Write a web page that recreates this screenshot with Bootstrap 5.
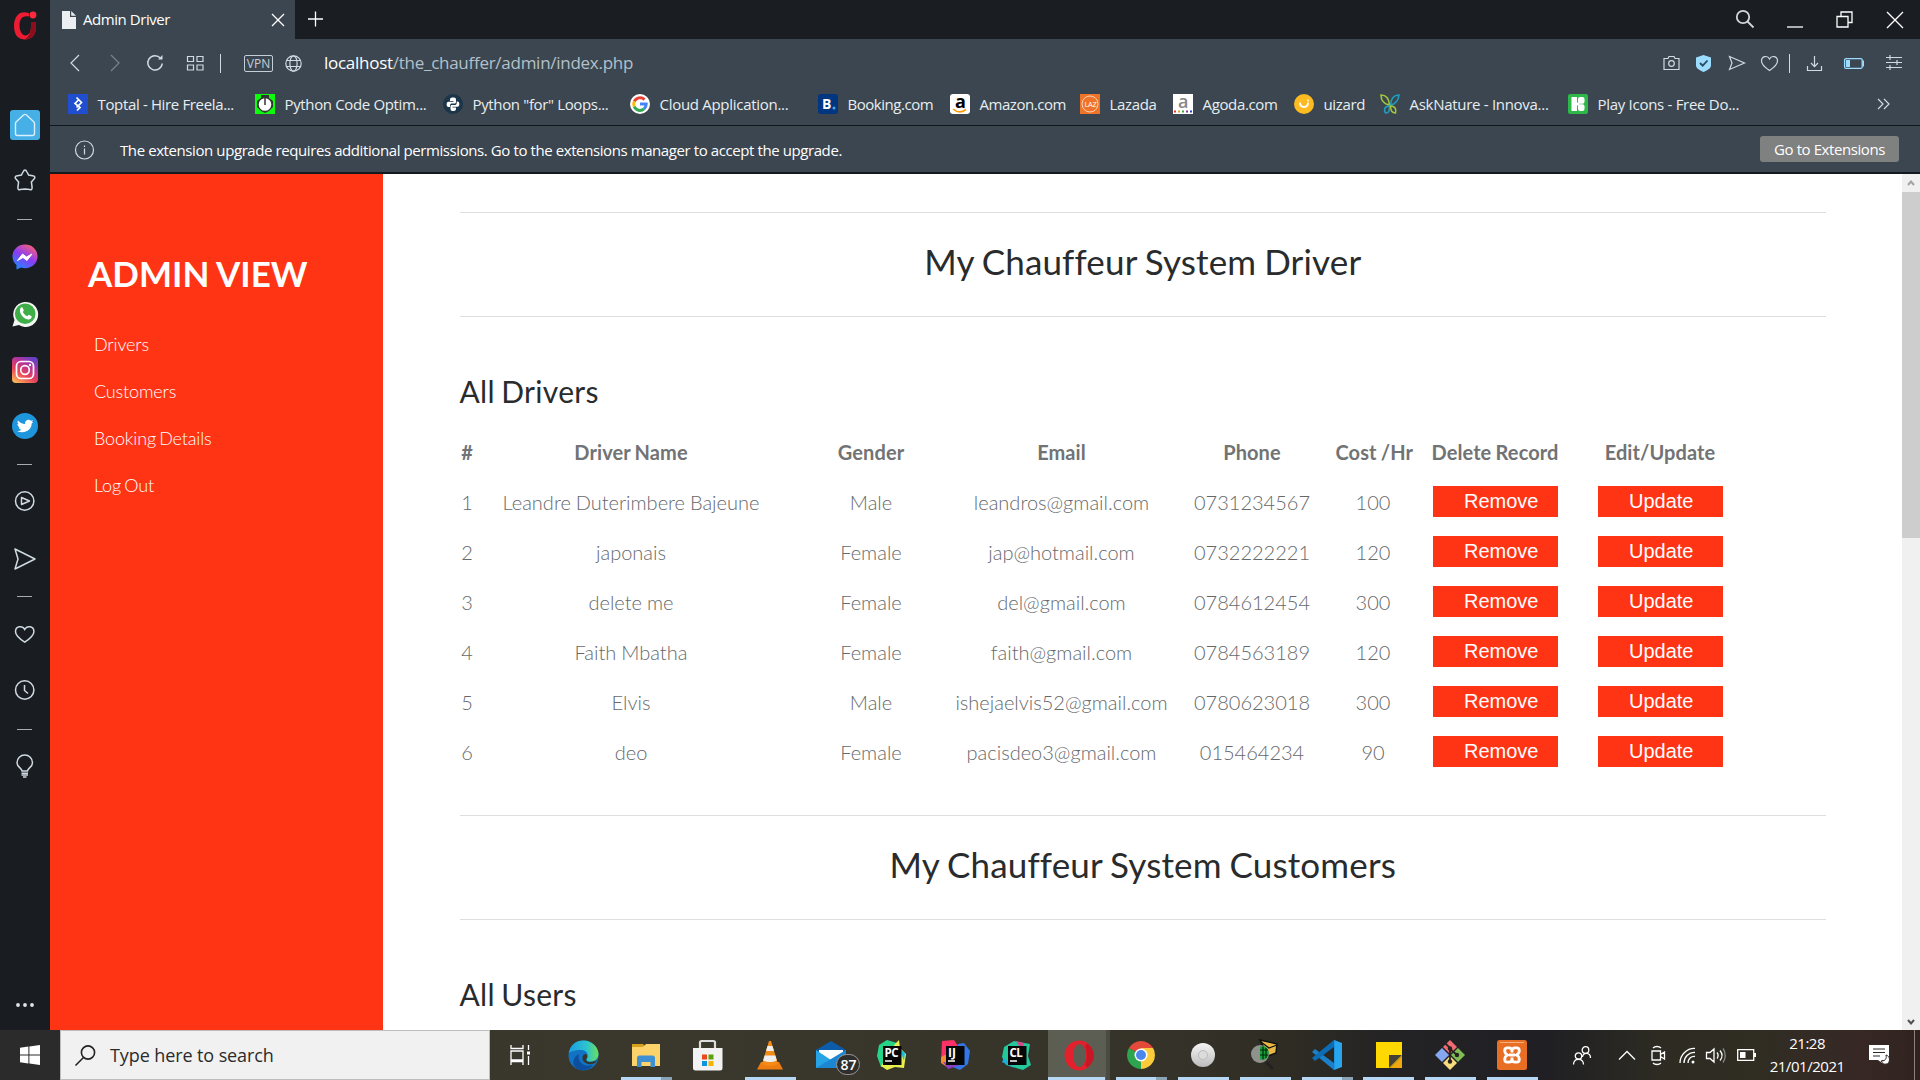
<!DOCTYPE html>
<html lang="en">
<head>
<meta charset="utf-8">
<title>Admin Driver</title>
<link rel="stylesheet" href="https://cdn.jsdelivr.net/npm/bootstrap@5.3.0/dist/css/bootstrap.min.css">
<script src="https://cdn.jsdelivr.net/npm/bootstrap@5.3.0/dist/js/bootstrap.bundle.min.js"></script>
<style>
  body { width: 1920px; height: 1080px; font: 15px/20px "Open Sans", "Noto Sans", sans-serif; letter-spacing: -.35px; background: #1a1e22; }
  svg { display: block; flex: none; fill: none; overflow: visible; }
  .ui { white-space: nowrap; }
  .ln { stroke: #cfdae2; stroke-width: 1.2; }
  .wh { stroke: #fff; stroke-width: 1.3; }

  /* Opera side bar */
  .rail { width: 50px; padding-right: 1px; background: #191d22; display: grid; justify-items: center; align-items: center;
    grid-template-rows: 50px 50px 50px 60px 18px 58px 56px 56px 56px 20px 54px 62px 12px 64px 48px 30px 44px 1fr; }
  .rail .dash { width: 15px; height: 1px; background: #a4abb1; }
  .rail .dots { align-self: end; margin-bottom: 23px; }
  .rail .ln { stroke-width: 1.5; }

  /* Browser chrome */
  .tabs { height: 39px; background: #1a1e22; color: #fff; }
  .tab { width: 245px; background: #3b4650; padding: 0 11px 0 12px; letter-spacing: -.44px; }
  .tab-name { margin: 0 auto 1px 7px; }
  .wincontrols { gap: 33px; padding-right: 17px; }
  .tools { height: 48px; background: #3b4650; padding-left: 18px; padding-right: 18px; }
  .tools .fwd { margin-left: 26px; } .tools .reload { margin-left: 25px; } .tools .speed { margin-left: 24px; }
  .tools .globe { margin-left: 12px; } .tools .gap-m { margin-left: 17px; } .tools .gap-s { margin-left: 16px; }
  .tools .gap-xs { margin-left: 11px; } .tools .gap-l { margin-left: 22px; }
  .addr { font-size: 17px; letter-spacing: -.27px; color: #b4c0c9; margin-left: 22px; }
  .addr b { font-weight: 400; color: #fff; }
  .vpn { width: 29px; height: 17px; margin-left: 23px; border: 1px solid #c3ced6; border-radius: 2px; font-size: 12px; line-height: 15px; letter-spacing: 0; color: #c3ced6; text-align: center; }
  .rule { width: 1px; height: 19px; background: #cfdae2; }
  .marks { height: 38px; background: #3b4650; color: #e7edf1; padding: 0 31px 5px 18px; }
  .marks .bm { gap: 9.5px; width: 187px; }
  .marks .bm:nth-child(2), .marks .bm:nth-child(4), .marks .bm:nth-child(10) { width: 188px; }
  .marks .bm:nth-child(5) { width: 132px; } .marks .bm:nth-child(6) { width: 130px; letter-spacing: -.45px; }
  .marks .bm:nth-child(7) { width: 93px; } .marks .bm:nth-child(8) { width: 121px; }
  .marks .bm:nth-child(9) { width: 86px; }
  .marks .bm:nth-child(n+10) { letter-spacing: -.29px; }
  .marks .bm:nth-child(4) { letter-spacing: -.29px; }
  .marks .bm:nth-child(5) { letter-spacing: -.47px; }
  .info { height: 49px; background: #3b4650; border-top: 1px solid #11161b; border-bottom: 2px solid #14191e; color: #fff; padding: 1px 21px 0 24px; letter-spacing: -.41px; }
  .info-text { margin: 1px auto 0 26px; }
  .goext { width: 139px; height: 26px; background: #7f8080; border: 0; border-radius: 3px; color: #fff; font-size: 15px; line-height: 20px; padding: 0; letter-spacing: -.42px; margin-bottom: 1px; }

  /* Page */
  .page { font-family: Lato, sans-serif; background: #fff; letter-spacing: 0; overflow: hidden; }
  .side { width: 333px; background: #ff3415; color: #fff; padding: 78px 0 0 38px; }
  .side h1 { font-size: 35px; line-height: 42px; font-weight: 700; letter-spacing: 0; word-spacing: -.5px; margin: 0 0 27px; }
  .side a { color: #fff; font-size: 18px; line-height: 47px; font-weight: 300; letter-spacing: -.15px; word-spacing: -1.500px; padding: 0 0 0 6px; }
  .main { padding: 38px 76px 0 77px; color: #292b2c; overflow: hidden; }
  .main .title-band, .main .sub, .drivers { position: static; margin-left: -.5px; }
  .title-band { height: 105px; border-top: 1px solid #dedede; border-bottom: 1px solid #dedede; text-align: center; font-size: 35px; line-height: 42px; padding-top: 27px; margin: 0; font-weight: 400; letter-spacing: .15px; word-spacing: -1.200px; }
  .sub { font-size: 30px; line-height: 36px; font-weight: 400; margin: 56px 0 18px; letter-spacing: .3px; word-spacing: -1.500px; }
  .drivers { table-layout: fixed; width: 1281px; text-align: center; font-size: 20px; line-height: 24px; color: #717374; margin-bottom: 38px; }
  .drivers col:nth-child(1) { width: 15px; } .drivers col:nth-child(2) { width: 313px; }
  .drivers col:nth-child(3) { width: 167px; } .drivers col:nth-child(4) { width: 214px; }
  .drivers col:nth-child(5) { width: 167px; } .drivers col:nth-child(6) { width: 75px; }
  .drivers col:nth-child(7) { width: 169px; } .drivers col:nth-child(8) { width: 161px; }
  .drivers th, .drivers td { height: 50px; padding: 0; vertical-align: middle; white-space: nowrap; }
  .drivers th { letter-spacing: .1px; word-spacing: -.8px; }
  .drivers td { font-weight: 300; color: #66696b; letter-spacing: 0; word-spacing: -.5px; }
  .drivers .act { display: block; width: 125px; height: 31px; background: #ff3415; color: #fff; border: 0; border-radius: 0; margin: 0 auto 2px; padding: 0 0 0 31.5px; font: 20px/30px "Liberation Sans", sans-serif; text-align: left; }
  .scroller { width: 18px; background: #f0f0f0; }
  .scroller .thumb { width: 18px; height: 346px; background: #cdcdcd; }
  .scroller .arrow { height: 18px; }

  /* Windows taskbar */
  .taskbar { height: 50px; background: linear-gradient(90deg, #38352b 0, #3a382c 700px, #353329 1180px, #2f2d23 1280px, #232225 1400px, #202024 1550px, #2d2b22 1660px, #302d23 1760px, #372826 1860px, #30231f 1920px); color: #fff; }
  .start { width: 60px; background: #2b2b2b; }
  .search { width: 430px; background: #f1f1f1; border: 1px solid #bdbdbd; color: #2b2b2b; font-size: 18px; letter-spacing: -.1px; padding-left: 14px; gap: 14px; }
  .app { width: 61.9px; height: 50px; flex: none; display: flex; align-items: center; justify-content: center; position: relative; }
  .app.tview { width: 60.9px; margin-right: 2px; }
  .app.run::after { content: ""; position: absolute; left: 6px; bottom: 0; width: 51px; height: 3px; background: #b6d8f4; }
  .app.multi::after { background: linear-gradient(90deg, #b6d8f4 40px, #8ba3b6 40px); }
  .app.active { background: #5c5d53; box-shadow: inset -4px 0 #4b4b43; }
  .app.active::after { left: 0; width: 57px; }
  .badge-num { position: absolute; left: 36px; top: 24px; width: 24px; height: 21px; border: 1px solid #999; border-radius: 11px; background: #2e2f2d; font: 600 14px/19px "Open Sans", sans-serif; text-align: center; letter-spacing: 0; }
  .tray { margin-left: 30px; }
  .tray .up { margin-left: 28px; } .tray .meet { margin-left: 16px; } .tray .wifi { margin-left: 13px; }
  .tray .vol { margin-left: 10px; } .tray .batt { margin-left: 12px; } .tray .note { margin-left: 20px; }
  .clock { text-align: center; line-height: 23px; width: 84px; margin-left: 9px; letter-spacing: -.46px; }
  .peek { width: 1px; background: #8a807d; margin-left: 24px; }
</style>
</head>
<body class="d-flex flex-column overflow-hidden m-0">
<div class="d-flex flex-grow-1 overflow-hidden">

  <aside class="rail flex-shrink-0">
    <svg width="24" height="30" viewBox="0 0 24 30"><path fill-rule="evenodd" d="M16 3.300C7-.5 1 6 1 16s5 13.500 11 13.500c7 0 11-5 11-12.500v-5h-5v5c0 4.500-2 8.500-5.500 8.500S6.500 21 6.500 15.500C6.500 9.500 9 5 16 6.500z" fill="#ee1c33"/><path d="M18 12h5v5c0 7.500-4 12.500-11 12.500 4-3 6-7 6-12.500z" fill="#8c0d1c"/><circle cx="20" cy="5" r="3.400" fill="#ff2a3f"/></svg>
    <i></i>
    <svg width="30" height="30" viewBox="0 0 30 30"><rect width="30" height="30" rx="3" fill="#45afe6"/><path d="M5.500 13.500Q5.500 12.500 6.300 11.700L13.500 5Q15 3.800 16.500 5l7.200 6.700q.8.800.8 1.800v10a2 2 0 0 1-2 2h-15a2 2 0 0 1-2-2z" stroke="#d9effa" stroke-width="1.400"/></svg>
    <svg class="ln" width="22" height="22" viewBox="0 0 22 22"><path d="M11 1c1 0 1.500 1 2 2l1.600 3 4 .7c2.400.4 2.900 1.800 1.400 3.400l-2.600 2.800.7 5.500c.1 1.900-.6 2.600-2.400 2.200L11 20l-4.700.6c-1.800.4-2.500-.3-2.400-2.200l.7-5.500L2 10.100C.5 8.500 1 7.100 3.400 6.700l4-.7L9 3c.5-1 1-2 2-2z"/></svg>
    <i class="dash"></i>
    <svg width="26" height="26" viewBox="0 0 26 26"><defs><linearGradient id="ms" x1=".2" y1="1" x2=".8" y2="0"><stop stop-color="#1a8cff"/><stop offset=".5" stop-color="#8a3cf5"/><stop offset="1" stop-color="#ff6070"/></linearGradient></defs><path d="M13 .5C6 .5.500 5.500.500 12.500c0 3.500 1.500 6.500 4 8.500v4.500l4.500-2c8 2.500 16.500-2.500 16.500-11C25.500 5.500 20 .5 13 .5z" fill="url(#ms)"/><path d="M5.500 16.500l5-6.500 4 3 5.500-3-5 6.500-4-3z" fill="#fff" stroke="#fff"/></svg>
    <svg width="26" height="26" viewBox="0 0 26 26"><path d="M.500 25.500l2-6.500A12.500 12.500 0 1 1 7 24z" fill="#f4f6f4"/><circle cx="13.200" cy="12.800" r="10.300" fill="#3fae49"/><path d="M8.500 7c1-1 2-.8 2.500.4l.8 2-1 1.600c1 2 2.400 3.300 4.400 4.200l1.500-1.500 2.600 1.400c.8.500.3 2.200-1 3C14 20.500 5.500 12.500 8.500 7z" fill="#fff"/></svg>
    <svg width="26" height="26" viewBox="0 0 26 26"><defs><linearGradient id="ig" x1=".1" y1="1" x2=".7" y2="0"><stop stop-color="#fdc157"/><stop offset=".4" stop-color="#e8425c"/><stop offset=".75" stop-color="#b233a0"/><stop offset="1" stop-color="#6740c4"/></linearGradient></defs><rect width="26" height="26" rx="4" fill="url(#ig)"/><g stroke="#fff" stroke-width="1.700"><rect x="4.500" y="4.500" width="17" height="17" rx="4.500"/><circle cx="13" cy="13" r="4.300"/></g><circle cx="18" cy="8" r="1.200" fill="#fff"/></svg>
    <svg width="26" height="26" viewBox="0 0 26 26"><circle cx="13" cy="13" r="13" fill="#1f95dc"/><path d="M6 7.500c2 2.300 4.200 3.300 7 3.500-.5-3.500 3.500-5.500 6-3.200l2-.6-1 1.900 1.200-.2-1.500 1.700C19.700 17.500 12 21.500 5 18c2 .1 3.300-.4 4.500-1.300-1.500-.2-2.400-1-2.900-2.200h1.300C6.300 13.700 5.400 12.500 5.400 11l1.300.3C5.300 10 5.200 8.700 6 7.500z" fill="#fff"/></svg>
    <i class="dash"></i>
    <svg class="ln" width="20" height="20" viewBox="0 0 20 20"><circle cx="9.700" cy="10" r="9.200"/><path d="M6.500 6.500v7l8-3.500z" stroke-linejoin="round"/></svg>
    <svg class="ln" width="22" height="22" viewBox="0 0 22 22"><path d="M1 1l20 10L1 21l3-10z" stroke-linejoin="round"/></svg>
    <i class="dash"></i>
    <svg class="ln" width="20" height="17" viewBox="0 0 20 17"><path d="M9.700 16.200C5 13 .5 9.700.500 5.700c0-5.500 6.700-6.700 9.200-2.300 2.500-4.400 9.200-3.200 9.200 2.300 0 4-4.500 7.300-9.200 10.500z"/></svg>
    <svg class="ln" width="20" height="20" viewBox="0 0 20 20"><circle cx="9.700" cy="10" r="9.200"/><path d="M9.500 5v5.500l3.500 3"/></svg>
    <i class="dash"></i>
    <svg class="ln" width="18" height="23" viewBox="0 0 18 23"><path d="M6 16c0-3-5-3.500-5-8.300a7.700 7.700 0 0 1 15.500 0C16.500 12.500 11.500 13 11.500 16zM5.500 18.200h6.500M5.500 20h6.500M7 22h3.500"/></svg>
    <svg class="dots" width="18" height="4" viewBox="0 0 18 4"><g fill="#dfe6ea"><circle cx="2" cy="2" r="1.900"/><circle cx="9" cy="2" r="1.900"/><circle cx="16" cy="2" r="1.900"/></g></svg>
  </aside>

  <div class="d-flex flex-column flex-grow-1 overflow-hidden">
    <header class="ui flex-shrink-0">
      <div class="tabs d-flex align-items-center">
        <div class="tab d-flex align-items-center h-100">
          <svg width="14" height="18" viewBox="0 0 14 18"><path d="M0 0h8v6h6v12H0zM9.200 0L14 4.800H9.200z" fill="#eceff1"/></svg>
          <span class="tab-name">Admin Driver</span>
          <svg class="wh" width="12" height="12" viewBox="0 0 12 12"><path d="M0 0l12 12M12 0L0 12"/></svg>
        </div>
        <svg class="wh ms-3 me-auto" width="15" height="15" viewBox="0 0 15 15"><path d="M4.500-.5v15M-3 7h15"/></svg>
        <div class="wincontrols d-flex align-items-center">
          <svg width="18" height="18" viewBox="1 1 18 18" stroke="#d4d7d9" stroke-width="1.800"><circle cx="7" cy="7" r="6.200"/><path d="M11.500 11.500l6 6"/></svg>
          <svg class="wh" width="16" height="16" viewBox="1 0 16 16"><path d="M0 15h16"/></svg>
          <svg class="wh" width="17" height="17" viewBox="1 0 17 17"><path d="M1 5.500h11v10.500H1zM5 5V1h11v10.500h-4"/></svg>
          <svg class="wh" width="16" height="16" viewBox="0 0 16 16"><path d="M0 0l16 16M16 0L0 16"/></svg>
        </div>
      </div>

      <div class="tools d-flex align-items-center">
        <svg class="ln" width="14" height="16" viewBox="0 0 14 16"><path d="M11 0L3 8l8 8"/></svg>
        <svg class="fwd" width="14" height="16" viewBox="0 0 14 16" stroke="#77838d" stroke-width="1.200"><path d="M3 0l8 8-8 8"/></svg>
        <svg class="ln reload" width="16" height="16" viewBox="0 0 16 16"><path d="M15.200 8.500A7.200 7.200 0 1 1 13.500 3.200" stroke-width="1.500"/><path d="M11 4.500h4.500V0z" fill="#cfdae2" stroke="none"/></svg>
        <svg class="ln speed" width="17" height="15" viewBox="0 0 17 15"><path d="M.5.500h6v5h-6zM10 .5h6v5h-6zM.5 9h6v5h-6zM10 9h6v5h-6z"/></svg>
        <i class="rule gap-s"></i>
        <span class="vpn">VPN</span>
        <svg class="ln globe" width="17" height="17" viewBox="0 0 17 17"><circle cx="8.500" cy="8.500" r="7.700"/><ellipse cx="8.500" cy="8.500" rx="3.600" ry="7.700"/><path d="M1.500 5.500h14M1.500 11.500h14"/></svg>
        <span class="addr me-auto"><b>localhost</b>/the_chauffer/admin/index.php</span>
        <svg class="ln" width="16" height="14" viewBox="-.500 0 16 14"><path d="M.5 2.500h4l1-2h5l1 2h4v11H.5z"/><circle cx="8" cy="7.500" r="2.800"/></svg>
        <svg class="gap-m" width="15" height="17" viewBox="0 0 15 17"><path d="M7.500 0L15 2.500v8c0 3-4 5-7.500 6.500C4 15.500 0 13.500 0 10.500v-8z" fill="#9bdcff"/><path d="M4 8l2.700 2.700L11.500 5.500" stroke="#2c4a5e" stroke-width="1.800"/></svg>
        <svg class="ln gap-m" width="17" height="14" viewBox="-.500 0 17 14"><path d="M1 .5L16 7 1 13.500 3.500 7z"/></svg>
        <svg class="ln gap-s" width="17" height="15" viewBox="0 0 17 15"><path d="M8.500 14.500C4 11.500.5 8.500.5 5c0-5 6-6 8-2 2-4 8-3 8 2 0 3.500-3.500 6.500-8 9.500z"/></svg>
        <i class="rule gap-xs"></i>
        <svg class="ln gap-m" width="15" height="15" viewBox="0 0 15 15"><path d="M.5 10v4.500h14V10M7.500 0v10.500M4 7l3.500 3.700L11 7"/></svg>
        <svg class="gap-l" width="20" height="11" viewBox="0 0 20 11"><rect x=".6" y=".6" width="17.600" height="9.800" rx="1.500" stroke="#9bdcff" stroke-width="1.300"/><path d="M2 2h4v7H2zM18.500 2.500H20v6h-1.500z" fill="#9bdcff"/></svg>
        <svg class="ln gap-l" width="16" height="15" viewBox="0 1 16 15"><path d="M0 2.500h16M0 7.500h16M0 12.500h16M4 0v5M11 5v5M4 10v5"/></svg>
      </div>

      <nav class="marks d-flex align-items-center">
        <div class="bm d-flex align-items-center"><svg width="20" height="20" viewBox="0 0 20 20"><path d="M0 0h20v20H0z" fill="#204ecf"/><path d="M8.500 3.500l5 5-5 5M11 5.500l-4 4 5 4-3 3" stroke="#fff" stroke-width="1.700"/></svg>Toptal - Hire Freela...</div>
        <div class="bm d-flex align-items-center"><svg width="20" height="20" viewBox="0 0 20 20"><path d="M0 0h20v20H0z" fill="#0cfc0c"/><path d="M6 1h8v3l4 3v6l-4 4-4 2-4-2-4-4V7l4-3z" fill="#333"/><circle cx="10" cy="10.500" r="6.300" fill="#fff"/><path d="M10 4v7" stroke="#333" stroke-width="1.500"/></svg>Python Code Optim...</div>
        <div class="bm d-flex align-items-center"><svg width="20" height="20" viewBox="0 0 20 20"><circle cx="10" cy="10" r="10" fill="#1d3549"/><path d="M10 3.500c-3 0-3 1-3 3.500h3.500v.8H5.500C3 7.800 3 13 5.500 13H7v-1.500c0-1.500 1-2 2-2h2.500c1 0 1.500-.7 1.500-1.500V5.500c0-1.500-1-2-3-2zM10 17c3 0 3-1 3-3.500H9.500v-.8h5c2.500 0 2.500-5.200 0-5.200h-.8V9c0 1.500-1 2-2 2H9c-1 0-1.500.7-1.500 1.500V15c0 1.500 1 2 2.500 2z" fill="#fff"/></svg>Python "for" Loops...</div>
        <div class="bm d-flex align-items-center"><svg width="20" height="20" viewBox="0 0 20 20"><circle cx="10" cy="10" r="10" fill="#fff"/><g stroke-width="3"><path d="M4.300 7.500A6.300 6.300 0 0 1 14.500 5.600" stroke="#ea4335"/><path d="M4.300 12.700a6.300 6.300 0 0 1 0-5.300" stroke="#fbbc05"/><path d="M14 14.900a6.300 6.300 0 0 1-9.800-2.200" stroke="#34a853"/><path d="M10 10h6.200c0 2-.8 3.800-2.200 5" stroke="#4285f4"/></g></svg>Cloud Application...</div>
        <div class="bm d-flex align-items-center"><svg width="20" height="20" viewBox="0 0 20 20"><rect width="20" height="20" rx="3" fill="#003580"/><text x="4" y="15" font-size="14" font-weight="700" fill="#fff" letter-spacing="0">B</text><circle cx="16" cy="14" r="1.500" fill="#4aa8ee"/></svg>Booking.com</div>
        <div class="bm d-flex align-items-center"><svg width="20" height="20" viewBox="0 0 20 20"><rect width="20" height="20" rx="3" fill="#fff"/><text x="5" y="14" font-size="18" font-weight="700" fill="#000">a</text><path d="M3 15c4 3.500 9 3.500 13 .5" stroke="#f90" stroke-width="1.600"/></svg>Amazon.com</div>
        <div class="bm d-flex align-items-center"><svg width="20" height="20" viewBox="0 0 20 20"><path d="M0 0h20v20H0z" fill="#f0732a"/><circle cx="10" cy="10" r="8" stroke="#fbd3b4"/><text x="4.500" y="13" font-size="7.500" fill="#fff">LAZ</text></svg>Lazada</div>
        <div class="bm d-flex align-items-center"><svg width="20" height="20" viewBox="0 0 20 20"><path d="M0 0h20v20H0z" fill="#fff"/><text x="5" y="14" font-size="18" font-weight="600" fill="#888">a</text><path d="M1 16.500h2v2H1z" fill="#e33"/><path d="M5 16.500h2v2H5z" fill="#e8a020"/><path d="M9 16.500h2v2H9z" fill="#3a3"/><path d="M13 16.500h2v2h-2z" fill="#939"/><path d="M17 16.500h2v2h-2z" fill="#24c"/></svg>Agoda.com</div>
        <div class="bm d-flex align-items-center"><svg width="20" height="20" viewBox="0 0 20 20"><circle cx="10" cy="10" r="10" fill="#fdbb21"/><path d="M6 8.500c0 6 8 6 8 0" stroke="#fff" stroke-width="1.800"/><circle cx="14" cy="6.500" r="1" fill="#fff"/></svg>uizard</div>
        <div class="bm d-flex align-items-center"><svg width="20" height="20" viewBox="0 0 20 20" stroke-width="1.600"><path d="M9.500 11C3 10 1 5 1 1c5 0 8 4 8.500 10z" stroke="#a4c639"/><path d="M10.500 11c6-1 8-6 8.500-10-5 0-8 4-8.500 10z" stroke="#1f9ec0"/><path d="M9.500 12c-5 0-6 4-4 7 4 0 4-3 4-7z" stroke="#1f9ec0"/><path d="M10.500 12c5 0 6 4 5 7-4 0-5-3-5-7z" stroke="#a4c639"/></svg>AskNature - Innova...</div>
        <div class="bm d-flex align-items-center"><svg width="20" height="20" viewBox="0 0 20 20"><rect width="20" height="20" rx="2" fill="#2db84a"/><path d="M3.500 3H9v14H3.500z" fill="#fff"/><rect x="10" y="3" width="6.500" height="6.700" rx="2" fill="#fff"/><rect x="10" y="10.300" width="6.500" height="6.700" rx="2" fill="#fff"/><path d="M8.500 8.500h3v3h-3z" fill="#fff"/></svg>Play Icons - Free Do...</div>
        <svg class="ln ms-auto" width="12" height="10" viewBox="0 0 12 10"><path d="M1 0l5 5-5 5M7 0l5 5-5 5"/></svg>
      </nav>

      <div class="info d-flex align-items-center">
        <svg class="ln" width="20" height="20" viewBox="-.5 0 20 20"><circle cx="10" cy="10" r="9"/><path d="M10 8.500v6M10 5.500V7"/></svg>
        <span class="info-text">The extension upgrade requires additional permissions. Go to the extensions manager to accept the upgrade.</span>
        <button class="goext">Go to Extensions</button>
      </div>
    </header>

    <div class="page d-flex flex-grow-1">
      <nav class="side flex-shrink-0">
        <h1>ADMIN VIEW</h1>
        <div class="nav flex-column">
          <a class="nav-link" href="#">Drivers</a>
          <a class="nav-link" href="#">Customers</a>
          <a class="nav-link" href="#">Booking Details</a>
          <a class="nav-link" href="#">Log Out</a>
        </div>
      </nav>
      <main class="main flex-grow-1">
        <h2 class="title-band">My Chauffeur System Driver</h2>
        <h3 class="sub">All Drivers</h3>
        <table class="drivers">
          <colgroup><col><col><col><col><col><col><col><col></colgroup>
          <thead><tr><th>#</th><th>Driver Name</th><th>Gender</th><th>Email</th><th>Phone</th><th>Cost /Hr</th><th>Delete Record</th><th>Edit/Update</th></tr></thead>
          <tbody>
            <tr><td>1</td><td>Leandre Duterimbere Bajeune</td><td>Male</td><td>leandros@gmail.com</td><td>0731234567</td><td>100</td><td><button class="act">Remove</button></td><td><button class="act">Update</button></td></tr>
            <tr><td>2</td><td>japonais</td><td>Female</td><td>jap@hotmail.com</td><td>0732222221</td><td>120</td><td><button class="act">Remove</button></td><td><button class="act">Update</button></td></tr>
            <tr><td>3</td><td>delete me</td><td>Female</td><td>del@gmail.com</td><td>0784612454</td><td>300</td><td><button class="act">Remove</button></td><td><button class="act">Update</button></td></tr>
            <tr><td>4</td><td>Faith Mbatha</td><td>Female</td><td>faith@gmail.com</td><td>0784563189</td><td>120</td><td><button class="act">Remove</button></td><td><button class="act">Update</button></td></tr>
            <tr><td>5</td><td>Elvis</td><td>Male</td><td>ishejaelvis52@gmail.com</td><td>0780623018</td><td>300</td><td><button class="act">Remove</button></td><td><button class="act">Update</button></td></tr>
            <tr><td>6</td><td>deo</td><td>Female</td><td>pacisdeo3@gmail.com</td><td>015464234</td><td>90</td><td><button class="act">Remove</button></td><td><button class="act">Update</button></td></tr>
          </tbody>
        </table>
        <h2 class="title-band">My Chauffeur System Customers</h2>
        <h3 class="sub">All Users</h3>
      </main>
      <div class="scroller d-flex flex-column flex-shrink-0">
        <div class="arrow d-flex align-items-center justify-content-center"><svg width="8" height="6" viewBox="0 0 8 6"><path d="M1 5l3-3.500L7 5" stroke="#a3a3a3" stroke-width="2"/></svg></div>
        <div class="thumb"></div>
        <div class="arrow d-flex align-items-center justify-content-center mt-auto"><svg width="8" height="6" viewBox="0 -1 8 6"><path d="M1 1l3 3.500L7 1" stroke="#505050" stroke-width="2"/></svg></div>
      </div>
    </div>
  </div>
</div>

<footer class="taskbar d-flex ui flex-shrink-0">
  <div class="start d-flex align-items-center justify-content-center"><svg width="20" height="20" viewBox="0 0 20 20"><path d="M0 2.800L8.400 1.600v7.900H0zM9.400 1.500L20 0v9.500H9.400zM0 10.500h8.400v7.900L0 17.200zM9.400 10.500H20V20L9.400 18.500z" fill="#fff"/></svg></div>
  <div class="search d-flex align-items-center"><svg width="21" height="21" viewBox="0 0 21 21" stroke="#222" stroke-width="1.600"><circle cx="13" cy="7.500" r="6.600"/><path d="M8.500 12.500L.5 20.500"/></svg><span>Type here to search</span></div>
  <div class="app tview"><svg class="wh" width="20" height="20" viewBox="0 0 20 20"><path d="M1 0v3.500h12V0M1 6h12v9H1zM1 20v-3.500h12V20M18.500 0v5M18.500 11v9"/><path d="M17 6.500h3v3h-3z" fill="#fff" stroke="none"/></svg></div>
  <div class="app"><svg width="31" height="31" viewBox="0 0 31 31"><defs><linearGradient id="e1" x2="1"><stop stop-color="#1b9de2"/><stop offset=".6" stop-color="#2cc3cf"/><stop offset="1" stop-color="#6be05a"/></linearGradient></defs><circle cx="15.500" cy="15.500" r="15" fill="#1273c4"/><path d="M.8 13C2 5 8 .500 15.500.500 24 .5 30.500 7 30.500 14c0 5-4 7.500-8 7.500-3.500 0-5-2-3.500-3.500 2-3 0-7.500-5.500-8C8 9.500 3 11 .8 13z" fill="url(#e1)"/><path d="M11 14c-2 7 4 14 14 11-4 6-13 7-18 2-3-4-2-10 4-13z" fill="#0c4f9e"/><path d="M19 18c-2 2-.5 4 3 4 3 0 6-1 7-2.500L27 23c-6 3-13 0-12.500-5.500 0-2 1.500-3.500 3.500-3.500 1.500 1.500 1.500 3 1 4z" fill="#38362b"/></svg></div>
  <div class="app run multi"><svg width="28" height="24" viewBox="0 0 28 24"><path d="M0 1h11l3 3H0z" fill="#d9a01c"/><path d="M0 4h11l3-3h14v22H0z" fill="#fbd36a"/><path d="M5 24V15q0-2.500 2.500-2.500h13q2.500 0 2.500 2.500v9h-4.500v-5h-9v5z" fill="#3f8fd3"/></svg></div>
  <div class="app"><svg width="30" height="31" viewBox="0 0 30 31"><path d="M7 9V2.500Q7 1 8.500 1h12Q22 1 22 2.500V9" stroke="#ddd" stroke-width="2.200"/><path d="M0 8h29.500v20q0 2.500-2.500 2.500H2.500Q0 30.500 0 28z" fill="#f2f2f2"/><path d="M9 14.500h5v5H9z" fill="#e8491f"/><path d="M15.500 14.500h5v5h-5z" fill="#5aa30a"/><path d="M9 21h5v5H9z" fill="#0c94e0"/><path d="M15.500 21h5v5h-5z" fill="#f5b400"/></svg></div>
  <div class="app run"><svg width="26" height="29" viewBox="0 0 26 29"><path d="M4 21h18l4 7.500H0z" fill="#ee7c10"/><path d="M12 0h2l7 23q-8 4-16 0z" fill="#f48b17"/><path d="M10.500 5h5l1.500 5H9zM7.600 14.500h10.800l1.400 5q-7 3-13.600 0z" fill="#eee"/></svg></div>
  <div class="app"><svg width="30" height="28" viewBox="0 0 30 28"><path d="M0 9L15 0l15 9v6H0z" fill="#0c5cab"/><path d="M3 9h24v10H3z" fill="#fff"/><path d="M0 9l15 10 15-10v18H0z" fill="#27a4e6"/><path d="M0 27L30 9v18z" fill="#1b86d2"/></svg><span class="badge-num">87</span></div>
  <div class="app"><svg width="30" height="30" viewBox="1 0 30 30"><path d="M2 5l8-5 10 3-12 24H4L0 16z" fill="#25d489"/><path d="M18 4l4-4 1 8 6 6-2 14-9-1-8 3-6-4z" fill="#e9f04e"/><path d="M22 8l6 5-1 8z" fill="#20bdd8"/><path d="M6 6h18.500v19H6z" fill="#070707"/><text x="7.500" y="16.500" font-size="11.500" font-weight="700" fill="#fff" letter-spacing="-.5">PC</text><path d="M8 21h7" stroke="#fff" stroke-width="1.500"/></svg></div>
  <div class="app"><svg width="30" height="30" viewBox="0 0 30 30"><path d="M2 1l12-1 4 6-8 12-9 4z" fill="#fb3268"/><path d="M1 17l6-3v13l-6-4z" fill="#f58b35"/><path d="M18 4l6-1 6 8-2 13-8 6-10-4z" fill="#3376e8"/><path d="M3 22l5 7 12-4z" fill="#8a3ec2"/><path d="M6 6h18.500v19H6z" fill="#070707"/><text x="8" y="16.500" font-size="12" font-weight="700" fill="#fff" letter-spacing="0">IJ</text><path d="M8 21h7" stroke="#fff" stroke-width="1.500"/></svg></div>
  <div class="app"><svg width="30" height="30" viewBox="0 0 30 30"><path d="M2 7l10-6 16 3-2 12 3 9-8 5-17-5-4-8z" fill="#22c99a"/><path d="M14 1l8 2-2 8z" fill="#d6488c"/><path d="M2 18l-2 4 12 6z" fill="#1baedb"/><path d="M6 6h18.500v19H6z" fill="#070707"/><text x="7.500" y="16.500" font-size="11.500" font-weight="700" fill="#fff" letter-spacing="-.5">CL</text><path d="M8 21h7" stroke="#fff" stroke-width="1.500"/></svg></div>
  <div class="app run active"><svg width="30" height="31" viewBox="0 0 30 31"><path fill-rule="evenodd" d="M15 .5a14.500 15 0 1 0 .1 0zM15.500 4a6.300 11.500 0 1 1-.1 0z" fill="#e3202c"/><path d="M21 6q4 9.500 0 19l2.500 2.500Q30 22 30 15.500T23.500 3.500z" fill="#b81020" opacity=".6"/></svg></div>
  <div class="app run multi"><svg width="28" height="28" viewBox="0 0 28 28"><path d="M14 14L1.900 7A14 14 0 0 1 26.100 7z" fill="#e5493a"/><path d="M14 14L26.100 7A14 14 0 0 1 14 28z" fill="#fccb3c"/><path d="M14 14v14A14 14 0 0 1 1.900 7z" fill="#2ea44f"/><path d="M14 7h12l-5.500 11z" fill="#fccb3c"/><circle cx="14" cy="14" r="6.500" fill="#fff"/><circle cx="14" cy="14" r="5" fill="#4a86ee"/></svg></div>
  <div class="app run"><svg width="24" height="24" viewBox="0 0 24 24"><defs><linearGradient id="g1" y2="1" x2="0"><stop stop-color="#f5f5f5"/><stop offset="1" stop-color="#bcbcbc"/></linearGradient></defs><circle cx="12" cy="12" r="12" fill="url(#g1)"/><circle cx="12" cy="12" r="4.500" stroke="#bbb" fill="#dcdcdc"/></svg></div>
  <div class="app run"><svg width="29" height="30" viewBox="0 0 29 30"><path d="M10 0l17 4-1 9-8 3z" fill="#eab646" stroke="#111" stroke-width="1.500"/><path d="M11 2l8 6 8-3" stroke="#111" stroke-width="1.300"/><circle cx="10" cy="14" r="9" fill="#8e918c"/><path d="M10 6.500h5c5 3 5 9 0 13h-5z" fill="#16a038"/><path d="M13 6.500v13M16 8v10M10 10h8M10 15h8" stroke="#022a0c" stroke-width="1.200"/><path d="M16 22l7 7" stroke="#222" stroke-width="3"/></svg></div>
  <div class="app run multi"><svg width="30" height="30" viewBox="0 0 30 30"><path d="M22 0l8 3v24l-8 3z" fill="#27a5ee"/><path d="M22 30L0 12l3-3 19 14z" fill="#1b80c8"/><path d="M22 0v7L3 21l-3-3z" fill="#0c6cb5"/><path d="M22 0h1v30h-1z" fill="#1f95e0"/></svg></div>
  <div class="app run"><svg width="26" height="26" viewBox="-1 0 26 26"><path d="M0 0h26v14L14 26H0z" fill="#ffd800"/><path d="M26 14v12H14z" fill="#efa80e"/><path d="M13 13h13L13 26z" fill="#454137"/></svg></div>
  <div class="app run"><svg width="30" height="30" viewBox="0 0 30 30"><path d="M15 0l7 7-7 7-7-7z" fill="#ef6a73"/><path d="M7 8l7 7-7 7-7-7z" fill="#84a7f0"/><path d="M23 8l7 7-7 7-7-7z" fill="#7fbe52"/><path d="M15 16l7 7-7 7-7-7z" fill="#f7dc7e"/><path d="M10 3l5 5v14M15 9l7 6" stroke="#26231f" stroke-width="1.800"/><g fill="#26231f"><circle cx="15" cy="8.500" r="2.200"/><circle cx="22" cy="15" r="2.200"/><circle cx="15" cy="21.500" r="2.200"/></g></svg></div>
  <div class="app run"><svg width="30" height="30" viewBox="0 0 30 30"><rect width="30" height="30" rx="2.500" fill="#e86e24"/><path d="M3 2.500h24" stroke="#f6b183"/><path d="M12 15H18M15 12.500V11q0-3.200-3-3.200h-1.500q-2.800 0-2.800 2.700 0 3 2.800 4.500-2.800 1.500-2.800 4.500 0 2.700 2.800 2.700H12q3 0 3-3.200v-1.500M15 11q0-3.200 3-3.200h1.500q2.800 0 2.800 2.700 0 3-2.800 4.500 2.800 1.500 2.800 4.500 0 2.700-2.800 2.700H18q-3 0-3-3.200" stroke="#fff" stroke-width="2.800"/></svg></div>
  <div class="tray d-flex align-items-center flex-grow-1">
    <svg class="wh" width="18" height="19" viewBox="0 0 18 19"><circle cx="12.500" cy="4" r="3.300"/><path d="M9.500 11c0-5 8-5 8 1"/><circle cx="5.500" cy="10" r="3.200"/><path d="M.5 18.500c0-7 10-7 10 0"/></svg>
    <svg class="wh up" width="16" height="9" viewBox="0 0 16 9"><path d="M0 8.500l8-8 8 8"/></svg>
    <svg class="wh meet" width="15" height="19" viewBox="0 0 15 19"><path d="M1 5h8.500v9H1zM9.500 8.500L13.500 6v7L9.500 10.500M2 2c2-2 6-2 8 0M2 17c2 2 6 2 8 0"/></svg>
    <svg class="wh wifi" width="17" height="17" viewBox="0 0 17 17"><path d="M1 16C1 8 8 1 16 1.500M5 16C5 10 10 5 16 5.500M9 16c0-4 3-7 7-6.500"/><circle cx="14" cy="15" r="1.500" fill="#fff" stroke="none"/></svg>
    <svg class="wh vol" width="19" height="17" viewBox="0 0 19 17"><path d="M.5 5.500H4L8 2v13l-4-3.500H.5zM11 5.500c1.500 2 1.500 4 0 6M14 3.500c2.500 3 2.500 7 0 10"/><path d="M17 1.500c3 4 3 10 0 14" stroke="#888"/></svg>
    <svg class="wh batt" width="19" height="12" viewBox="0 0 19 12"><path d="M.7.700h16v10.600h-16z"/><path d="M3 3h5.500v6H3zM17 4h2v4h-2z" fill="#fff" stroke="none"/></svg>
    <div class="clock">21:28<br>21/01/2021</div>
    <svg class="note" width="21" height="20" viewBox="0 0 21 20"><path d="M0 0h20v15h-7v3l-4-3H0z" fill="#fff"/><path d="M4 4h12M4 7.500h12M4 11h7" stroke="#302826" stroke-width="1.200"/><path d="M17 10c1 4-1 6-5 6 2 5 9 4 8.500-2-.3-2-1.500-3.500-3.500-4z" fill="#fff" stroke="#302826"/></svg>
    <i class="peek align-self-stretch"></i>
  </div>
</footer>
</body>
</html>
